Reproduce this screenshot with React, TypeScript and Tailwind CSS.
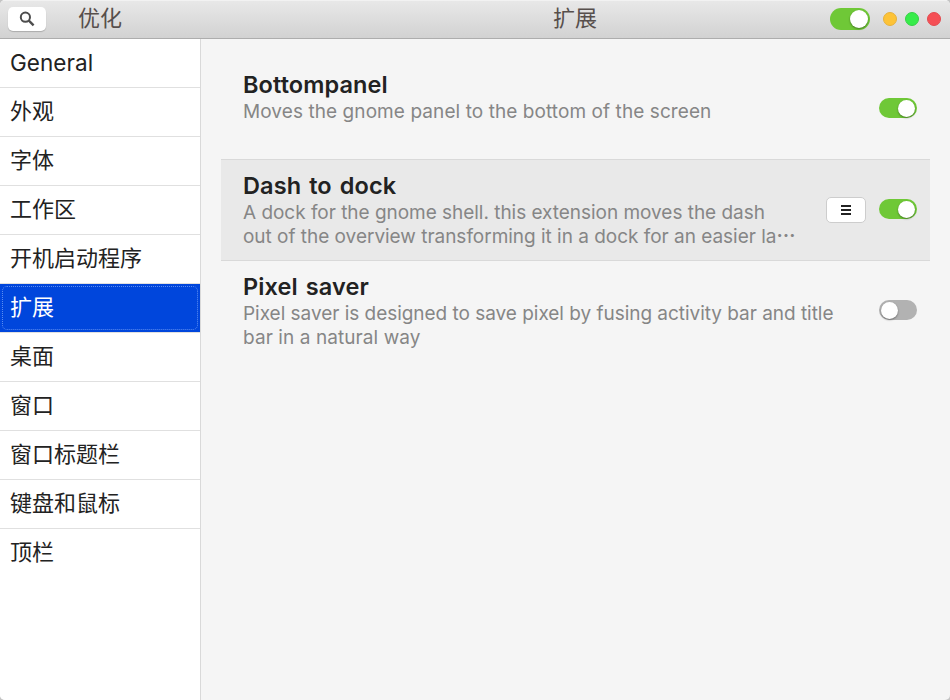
import type { ReactNode } from 'react';

const items = ['General', '外观', '字体', '工作区', '开机启动程序', '扩展', '桌面', '窗口', '窗口标题栏', '键盘和鼠标', '顶栏'];
const selected = '扩展';

function Switch({ on }: { on: boolean }) {
  return (
    <div
      className={`flex h-5 w-[38px] shrink-0 items-center rounded-full px-[2px] ${
        on ? 'justify-end bg-[#6fc837]' : 'justify-start bg-[#b2b2b2]'
      }`}
    >
      <div className="size-[17px] rounded-full bg-white shadow-[0_1px_2px_rgba(0,0,0,0.4)]" />
    </div>
  );
}

function Extension({ title, children, on, active, menu }: {
  title: string;
  children: ReactNode;
  on: boolean;
  active?: boolean;
  menu?: boolean;
}) {
  return (
    <section
      className={`flex h-[102px] justify-between border-y pr-[13px] pl-[22px] ${
        active ? 'border-[#d9d9d9] bg-[#e9e9e9]' : 'border-transparent'
      }`}
    >
      <div className="pt-[11px] text-[19px] leading-6 whitespace-nowrap text-[#868686]">
        <h2 className="h-[30px] text-[23.5px] leading-[30px] font-semibold tracking-[0.1px] text-[#222] [word-spacing:2px]">{title}</h2>
        {children}
      </div>
      <div className="flex h-[98px] items-center gap-[13px]">
        {menu && (
          <button className="mt-[2px] flex h-[26px] w-10 items-center justify-center rounded-[5px] border border-[#cdcdcd] bg-white">
            <svg width="10" height="10" viewBox="0 0 10 10" fill="#222" shapeRendering="crispEdges">
              <path d="M0 0h10v2H0zM0 4h10v2H0zM0 8h10v2H0z" />
            </svg>
          </button>
        )}
        <Switch on={on} />
      </div>
    </section>
  );
}

export default function App() {
  return (
    <div className="h-[700px] w-[950px] overflow-hidden bg-[#c4c4c4]">
      <div className="flex h-full flex-col overflow-hidden rounded-[5px] bg-[#f5f5f5] font-['Inter','Noto_Sans_CJK_SC',sans-serif] text-[22px] text-[#222]">
        <header className="flex h-[39px] shrink-0 items-center border-t border-b border-t-[#f2f2f2] border-b-[#adadad] bg-linear-to-b from-[#e8e8e8] to-[#d2d2d2] pb-px pl-2 text-[#574f4c]">
          <button className="flex h-6 w-[38px] items-center justify-center rounded-[5px] bg-white shadow-[0_1px_1px_rgba(0,0,0,0.2)]">
            <svg width="16" height="16" viewBox="0 0 16 16" fill="none" stroke="#4d4d4d">
              <circle cx="6.4" cy="6.2" r="4.6" strokeWidth="2" />
              <path d="M9.6 9.4L14.6 14.4" strokeWidth="2.4" />
            </svg>
          </button>
          <span className="ml-8 w-[155px] pb-[3px] leading-[34px]">优化</span>
          <h1 className="ml-80 w-[277px] pb-[3px] leading-[34px]">扩展</h1>
          <div className="flex h-[22px] w-10 shrink-0 items-center justify-end rounded-full bg-[#6fc837] pr-[2px]">
            <div className="size-[18px] rounded-full bg-white shadow-[0_1px_2px_rgba(0,0,0,0.4)]" />
          </div>
          <div className="ml-[13px] flex gap-2">
            <i className="size-[14px] rounded-full border border-[#e6b13c] bg-[#fdc337]" />
            <i className="size-[14px] rounded-full border border-[#36d146] bg-[#37ec4a]" />
            <i className="size-[14px] rounded-full border border-[#e34b50] bg-[#f54f55]" />
          </div>
        </header>
        <div className="flex flex-1">
          <nav className="w-[201px] shrink-0 border-r border-[#d9d9d9] bg-white">
            {items.map((item) => (
              <div
                key={item}
                className={`h-[49px] border-b border-[#e0e0e0] leading-[47px] last:border-transparent ${
                  item === selected ? 'text-white' : ''
                }`}
              >
                {item === selected ? (
                  <div className="h-12 bg-[#0046dc] p-[2px]">
                    <div className="h-11 rounded-[5px] border border-dotted border-[#5b8cf0] pl-[7px] leading-[41px]">{item}</div>
                  </div>
                ) : item === 'General' ? (
                  <div className="h-12 pl-[10px] text-[22.5px] leading-[48px] tracking-[0.05px]">{item}</div>
                ) : (
                  <div className="h-12 pl-[10px]">{item}</div>
                )}
              </div>
            ))}
          </nav>
          <main className="flex-1 px-5 pt-[19px]">
            <Extension title="Bottompanel" on>
              <p className="h-6 tracking-[0.08px]">Moves the gnome panel to the bottom of the screen</p>
            </Extension>
            <div className="-mt-px">
              <Extension title="Dash to dock" on active menu>
                <p className="h-6 tracking-[-0.03px]">A dock for the gnome shell. this extension moves the dash</p>
                <p className="h-6 tracking-[-0.02px]">
                  out of the overview transforming it in a dock for an easier la
                  <span className="font-['Noto_Sans_CJK_SC'] leading-none font-bold" lang="zh-CN">…</span>
                </p>
              </Extension>
            </div>
            <div className="-mt-px">
              <Extension title="Pixel saver" on={false}>
                <p className="h-6 tracking-[-0.03px]">Pixel saver is designed to save pixel by fusing activity bar and title</p>
                <p className="h-6 tracking-[0.08px]">bar in a natural way</p>
              </Extension>
            </div>
          </main>
        </div>
      </div>
    </div>
  );
}
